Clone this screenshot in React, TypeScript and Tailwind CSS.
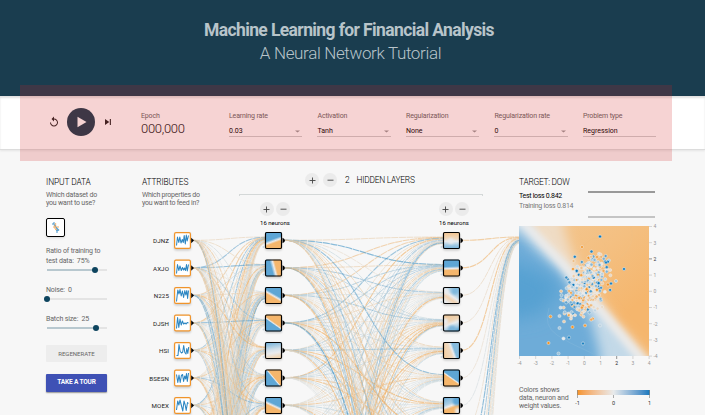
import React from "react";

const ORANGE = [245, 147, 34];
const NEUTRAL = [232, 234, 235];
const BLUE = [8, 119, 189];

function mix(w: number, neutral = NEUTRAL) {
  const t = Math.min(1, Math.abs(w));
  const end = w < 0 ? ORANGE : BLUE;
  return `rgb(${neutral.map((c, i) => Math.round(c + (end[i] - c) * t)).join(",")})`;
}

function makeRandom(seed: number) {
  let s = seed;
  return () => {
    s = (s + 0x6d2b79f5) | 0;
    let t = Math.imul(s ^ (s >>> 15), 1 | s);
    t = (t + Math.imul(t ^ (t >>> 7), 61 | t)) ^ t;
    return ((t ^ (t >>> 14)) >>> 0) / 4294967296;
  };
}

const controls = [
  { label: "Learning rate", value: "0.03", arrow: true },
  { label: "Activation", value: "Tanh", arrow: true },
  { label: "Regularization", value: "None", arrow: true },
  { label: "Regularization rate", value: "0", arrow: true },
  { label: "Problem type", value: "Regression", arrow: false },
];

const inputs = [
  { name: "DJNZ", d: "M2.500 13.500L3.500 5L4.800 10.500L5.800 5L7 11L8.300 7.500L9.300 10.500L10.200 3.500L11.300 12L12.300 3L13.200 9L14.500 3.500" },
  { name: "AXJO", d: "M2.500 14L3.500 5L4.800 11L6 6.500L7.300 11L8.500 8L9.500 10.500L10.500 8.500L11.500 11L12.500 5L13.300 11.500L14.500 5" },
  { name: "N225", d: "M2.500 14.500L3.800 3L5 7L6 2.500L7.200 9L8.400 4L9.600 10.500L10.800 3.500L11.800 8L12.800 3.500L13.600 11.500L14.500 3.500" },
  { name: "DJSH", d: "M2.500 14L3.600 3L4.800 13L6 4.500L7.200 10.500L8.400 6.500L9.600 9.500L11 8.500L12.200 9.500L13.200 8L14.500 8.500" },
  { name: "HSI", d: "M2.500 13.500L4 13.500L5 2.500L6.200 9.500L7.500 11L8.700 10L9.700 3.500L10.800 10.500L12 12L12.800 6.500L13.800 11.500L14.700 5" },
  { name: "BSESN", d: "M2.500 5L3.800 13L5 5.500L6.200 13L7.400 6L8.600 5L9.600 12L10.700 6.500L11.700 9.500L12.500 4L13.300 12L14.500 3.500" },
  { name: "MOEX", d: "M2.500 13L3.700 4L4.900 8L6 3L7.500 9L8.800 14L10 4L11.200 8L12.200 13.500L13.500 5.500L14.500 6.500" },
];

const PITCH = 27.5;
const LEFT = 142;
const TOP = 226;
const rowY = (i: number) => 240.3 - TOP + i * PITCH;

function buildLinks() {
  const rand = makeRandom(29);
  const links: { d: string; w: number }[] = [];
  const layer = (x1: number, x2: number, n1: number, n2: number, gain: number, bias: number, fixed: Record<string, number>) => {
    for (let j = 0; j < n2; j++) {
      for (let i = 0; i < n1; i++) {
        const r = rand() + rand() + rand() - 1.5;
        const w = fixed[`${i}-${j}`] ?? r * gain + bias;
        const sy = rowY(i);
        const ty = rowY(j) + ((i - (n1 - 1) / 2) / n1) * 7;
        const mx = (x1 + x2) / 2;
        links.push({ w, d: `M${x1} ${sy}C${mx} ${sy} ${mx} ${ty} ${x2} ${ty}` });
      }
    }
  };
  layer(193 - LEFT, 265 - LEFT, 20, 16, 0.55, -0.06, { "1-0": 0.5, "1-1": 0.55, "0-0": -0.2 });
  layer(285 - LEFT, 443 - LEFT, 16, 16, 0.55, -0.04, { "0-1": 0.65, "0-0": -0.25, "1-0": -0.45, "2-0": -0.4, "5-1": 0.3 });
  layer(462 - LEFT, 519 - LEFT, 16, 1, 0.8, 0, {
    "0-0": -0.5, "1-0": -0.55, "2-0": -0.2, "3-0": -0.15, "4-0": -0.55, "5-0": -0.12, "6-0": 0.08,
    "7-0": -0.15, "8-0": 0.6, "9-0": 0.4, "10-0": -0.2, "11-0": 0.45, "12-0": -0.2, "13-0": -0.1, "14-0": 0.1, "15-0": -0.15,
  });
  return links;
}
const links = buildLinks();

type Heat = { a: number; stops: [number, string][]; blobs?: [number, number, number, string][] };
const B = "#5ea6d5";
const O = "#f5b66c";
const W = "#e9ebed";
const layer1: Heat[] = [
  { a: 70, stops: [[0, B], [40, B], [54, W], [66, O], [100, O]] },
  { a: -15, stops: [[0, B], [38, B], [54, W], [66, O], [100, O]] },
  { a: 120, stops: [[0, B], [40, B], [52, W], [62, O], [100, O]] },
  { a: 125, stops: [[0, O], [44, O], [52, W], [58, B], [100, B]] },
  { a: 80, stops: [[0, "#77b3da"], [45, "#d4e1ea"], [65, W], [100, "#f1cfa5"]] },
  { a: -40, stops: [[0, B], [44, B], [51, W], [56, O], [100, O]] },
  { a: 115, stops: [[0, B], [40, B], [52, W], [62, O], [100, O]] },
];
const layer2: Heat[] = [
  { a: 90, stops: [[0, "#f2c28b"], [40, "#efd9bf"], [55, W], [75, "#a5cbe3"], [100, "#74b1da"]], blobs: [[8, 9, 3, W]] },
  { a: 88, stops: [[0, B], [40, B], [53, W], [64, O], [100, O]] },
  { a: 125, stops: [[0, "#8fc0df"], [35, "#b5d3e6"], [52, W], [72, "#f1d2b0"], [100, W]], blobs: [[3, 4, 3, W], [12, 4, 3.5, "#7fb8dc"]] },
  { a: 70, stops: [[0, "#efc99c"], [35, "#efd4b4"], [55, W], [80, "#a9cce3"], [100, B]], blobs: [[2, 7, 3, W], [9, 15, 4, "#7ab4da"]] },
  { a: -20, stops: [[0, "#f3cda0"], [42, "#efd9c0"], [55, W], [68, "#83badd"], [100, "#8bbddd"]] },
  { a: 125, stops: [[0, B], [44, B], [51, W], [58, O], [100, O]] },
  { a: 70, stops: [[0, "#7bb5db"], [35, "#aacde3"], [50, W], [64, O], [100, O]], blobs: [[14, 4, 4.500, B], [15, 14, 3, W]] },
];

function HeatNode({ x, y, heat, id }: { x: number; y: number; heat: Heat; id: string }) {
  const r = (heat.a * Math.PI) / 180;
  const dx = Math.cos(r) * 0.5;
  const dy = Math.sin(r) * 0.5;
  return (
    <g transform={`translate(${x} ${y})`}>
      <defs>
        <linearGradient id={id} x1={0.5 - dx} y1={0.5 - dy} x2={0.5 + dx} y2={0.5 + dy}>
          {heat.stops.map(([o, c], i) => <stop key={i} offset={`${o}%`} stopColor={c} />)}
        </linearGradient>
        <clipPath id={`${id}-clip`}><rect width="17" height="17" rx="1.5" /></clipPath>
      </defs>
      <rect x="0" y="1" width="17" height="17.500" rx="2" fill="#000" opacity=".18" filter="url(#soft)" />
      <circle cx="-1.500" cy="15" r="1" fill="#c9d9e3" />
      <g clipPath={`url(#${id}-clip)`}>
        <rect width="17" height="17" fill={`url(#${id})`} />
        {heat.blobs?.map(([cx, cy, br, c], i) => <circle key={i} cx={cx} cy={cy} r={br} fill={c} filter="url(#soft)" />)}
      </g>
      <rect x=".5" y=".5" width="16" height="16" rx="1.2" fill="none" stroke="#000" strokeWidth="1.150" />
      <path d="M17.500 5.800Q20 7 20 8.500Q20 10 17.500 11.200Z" fill="#000" />
    </g>
  );
}

function Network() {
  return (
    <svg className="block" width="377" height="189" viewBox="0 0 377 189">
      <defs>
        <filter id="soft" x="-50%" y="-50%" width="200%" height="200%"><feGaussianBlur stdDeviation="1" /></filter>
      </defs>
      <g fill="none" strokeDasharray="7 0.6">
        {links.map((l, i) => (
          <path key={i} d={l.d} stroke={mix(l.w * 1.15, [226, 226, 222])} strokeWidth={0.85 + Math.abs(l.w) * 0.5} strokeOpacity={0.6} />
        ))}
      </g>
      {inputs.map((n, i) => (
        <g key={n.name} transform={`translate(${174 - LEFT} ${rowY(i) - 8.3})`}>
          <text x="-5" y="11" textAnchor="end" fontSize="6.200" fill="#222" letterSpacing=".1" className="font-['Roboto',sans-serif]">{n.name}</text>
          <rect x="0" y="1" width="17" height="17.500" rx="2" fill="#000" opacity=".18" filter="url(#soft)" />
          <rect x=".6" y=".6" width="15.800" height="15.800" rx="1.300" fill="#fff" stroke="#f0942b" strokeWidth="1.200" />
          <path d={n.d} fill="none" stroke="#2c86c2" strokeWidth="1.050" strokeLinejoin="round" />
          <path d="M17.200 5.800L20 8.500L17.200 11.200Z" fill="#000" />
        </g>
      ))}
      {layer1.map((h, i) => <HeatNode key={i} id={`first-${i}`} x={265 - LEFT} y={rowY(i) - 8.3} heat={h} />)}
      {layer2.map((h, i) => <HeatNode key={i} id={`second-${i}`} x={443 - LEFT} y={rowY(i) - 8.3} heat={h} />)}
    </svg>
  );
}

function buildDots() {
  const rand = makeRandom(12);
  const gauss = () => Math.sqrt(-2 * Math.log(rand() + 1e-9)) * Math.cos(2 * Math.PI * rand());
  const dots: { x: number; y: number; w: number }[] = [];
  for (let i = 0; i < 430; i++) {
    const g = gauss();
    const h = gauss();
    const y = 61 + g * 16;
    const x = 67 - g * 5 + h * 9;
    if (y < 27 || y > 97 || x < 40 || x > 92) continue;
    const bias = y > 62 ? -0.1 : 0.14;
    dots.push({ x, y, w: Math.max(-1, Math.min(1, gauss() * 0.48 + bias)) });
  }
  const extra: [number, number, number][] = [
    [81, 10.5, 1], [63, 21, -0.9], [55.8, 30.7, 0.9], [87, 36.5, 0.9], [105, 43, 0.9], [97, 55, 0.3],
    [31.5, 90.5, -0.9], [29.5, 117, -1], [50, 111.500, 0.9], [64, 117.500, 0.9], [39.5, 127.500, 0.35],
    [44.500, 112.500, 0], [66, 99.500, -0.9], [81, 99.500, 0.2], [53.500, 101, -1], [40.500, 102, 0.3],
    [45, 95.500, -0.3], [92, 57.5, 0.9], [72.500, 25.500, 0.9], [78, 31, -0.8], [40.500, 90, 0.2], [54, 43, -0.9],
  ];
  extra.forEach(([x, y, w]) => dots.push({ x, y, w }));
  return dots;
}
const dots = buildDots();
const ticks = [4, 3, 2, 1, 0, -1, -2, -3, -4];

function Heatmap() {
  return (
    <svg className="mt-[7px] block overflow-visible" width="150" height="144" viewBox="0 0 150 144">
      <defs>
        <clipPath id="map"><rect width="130" height="130" /></clipPath>
        <filter id="map-near" x="-40%" y="-40%" width="180%" height="180%"><feGaussianBlur stdDeviation="3.500" /></filter>
        <filter id="map-mid" x="-40%" y="-40%" width="180%" height="180%"><feGaussianBlur stdDeviation="6" /></filter>
        <filter id="map-far" x="-60%" y="-60%" width="220%" height="220%"><feGaussianBlur stdDeviation="9" /></filter>
        <linearGradient id="map-orange" x1=".2" y1="0" x2=".8" y2=".7">
          <stop offset="0" stopColor="#f3c68f" /><stop offset=".5" stopColor="#f4bf80" /><stop offset="1" stopColor="#f5b66d" />
        </linearGradient>
      </defs>
      <g clipPath="url(#map)">
        <rect width="130" height="130" fill="url(#map-orange)" />
        <path d="M-20 -30H40L46 8L56 34L76 68L98 97L126 128L144 150V160H-20Z" fill="#efdcc5" filter="url(#map-mid)" />
        <path d="M-20 -30L4 -8L22 16L45 40L64 65L84 87L109 117L124 135V160H-20Z" fill="#c3d9e8" filter="url(#map-near)" />
        <path d="M-30 2L0 8L20 27L42 48L58 72L72 94L80 124L84 160H-30Z" fill="#6eacd8" filter="url(#map-mid)" />
        <path d="M-30 34L4 38L38 54L40 68L18 90L-30 96Z" fill="#57a1d2" filter="url(#map-far)" />
        <path d="M-6 -14L21 14L44 38L64 63L84 87L109 117L130 142" fill="none" stroke="#eeeeef" strokeWidth="8" filter="url(#map-near)" />
        <path d="M30 82Q24 100 38 109T62 122T84 134" fill="none" stroke="#83b8dc" strokeWidth=".8" opacity=".6" />
        <path d="M60 26Q78 0 88 22T70 55M112 0Q118 20 98 34" fill="none" stroke="#f1bf82" strokeWidth=".9" opacity=".7" />
      </g>
      {dots.map((p, i) => (
        <circle key={i} cx={p.x} cy={p.y} r="1.550" fill={mix(p.w)} stroke="#eeeeee" strokeOpacity=".65" strokeWidth=".75" />
      ))}
      {ticks.map((t, i) => {
        const p = 0.5 + i * 16.2;
        const strong = t === 2;
        return (
          <g key={`r${t}`} fill={strong ? "#333" : "#999"} fontSize="5" className="font-['Roboto',sans-serif]">
            <path d={`M130 ${p}h3`} stroke={strong ? "#777" : "#ccc"} strokeWidth=".8" />
            <text x="134.500" y={p + 1.8}>{t}</text>
          </g>
        );
      })}
      {ticks.map((t, i) => {
        const p = 0.5 + (8 - i) * 16.2;
        const strong = t === 2;
        return (
          <g key={`b${t}`} fill={strong ? "#222" : "#999"} fontSize="5" className="font-['Roboto',sans-serif]">
            <path d={`M${p} 130v3`} stroke={strong ? "#777" : "#ccc"} strokeWidth=".8" />
            <text x={p} y="138.500" textAnchor="middle">{t}</text>
          </g>
        );
      })}
    </svg>
  );
}

function RoundButton({ minus }: { minus?: boolean }) {
  return (
    <span className="flex size-3.5 items-center justify-center rounded-full bg-[#ebebeb]">
      <svg width="7" height="7" viewBox="0 0 7 7" stroke="#444" strokeWidth=".9">
        <path d={minus ? "M.5 3.200H6.500" : "M.5 3.500H6.500M3.500 .5V6.500"} />
      </svg>
    </span>
  );
}

function Slider({ pct }: { pct: number }) {
  return (
    <div className="relative ml-px h-[5px] w-[60px]">
      <div className="absolute top-[1.5px] h-[2px] w-full bg-[#e4e4e4]" />
      <div className="absolute top-[1.5px] h-[2px] bg-[#b8c8cf]" style={{ width: `${pct}%` }} />
      <div className="absolute -top-[0.5px] -ml-[3px] size-1.5 rounded-full bg-[#0d445e]" style={{ left: `${pct}%` }} />
    </div>
  );
}

function NeuronCount() {
  return (
    <div className="flex w-[34px] flex-col items-center">
      <div className="flex gap-[2.5px]"><RoundButton /><RoundButton minus /></div>
      <div className="mt-[3px] text-[6px] leading-[8px] whitespace-nowrap text-black">16 neurons</div>
    </div>
  );
}

export default function App() {
  return (
    <div className="relative h-[415px] w-[705px] overflow-hidden bg-[#f7f7f7] font-['Roboto',sans-serif] tracking-[-0.15px] text-[#666]">
      <header className="flex h-24 flex-col items-center bg-[#1a3d4f] pt-[18px] pr-[7px] text-[#b8c4ca]">
        <h1 className="text-[17.5px] leading-[24px] font-bold tracking-[-0.62px] whitespace-nowrap">Machine Learning for Financial Analysis</h1>
        <p className="pl-[3px] text-[17px] leading-[23px] font-light tracking-[-0.35px] whitespace-nowrap">A Neural Network Tutorial</p>
      </header>

      <section className="flex h-[54px] border-b border-[#dcdcdc] bg-white pl-[48px] shadow-[0_1px_2px_rgba(0,0,0,0.08),inset_0_2px_2px_rgba(0,0,0,0.12)]">
        <div className="flex w-[93px] items-center gap-[7px] pb-[1px]">
          <svg width="12" height="12" viewBox="0 0 24 24" fill="#222"><path d="M12 5V1L7 6l5 5V7c3.310 0 6 2.690 6 6s-2.690 6-6 6-6-2.690-6-6H4c0 4.420 3.580 8 8 8s8-3.580 8-8-3.580-8-8-8z" /></svg>
          <span className="flex size-7 items-center justify-center rounded-full bg-[#1a3d4f]">
            <svg className="ml-[2px]" width="10" height="12" viewBox="0 0 10 12" fill="#fff"><path d="M.5 .8V11.200L9.500 6z" /></svg>
          </span>
          <svg className="ml-[2px]" width="8" height="8" viewBox="0 0 8 8" fill="#222"><path d="M1 1V7L5.300 4zM5.800 1h1.100v6H5.800z" /></svg>
        </div>
        <div className="w-[88px] pt-[15px]">
          <div className="text-[7px] leading-[10px]">Epoch</div>
          <div className="text-[13px] leading-[16px] font-light tracking-[-0.3px] text-[#111]">000,000</div>
        </div>
        <div className="flex gap-[15.3px] pt-[15px]">
          {controls.map((c) => (
            <div key={c.label} className="w-[73.2px]">
              <div className="text-[7px] leading-[10px] tracking-[-0.15px] whitespace-nowrap">{c.label}</div>
              <div className="mt-[3px] flex h-[13px] items-center justify-between border-b border-[#cfcfcf] pt-[2px] pr-[2px] text-[7px] tracking-normal text-black">
                <span>{c.value}</span>
                {c.arrow && <svg width="5" height="3" viewBox="0 0 5 3"><path d="M0 .5H5L2.500 2.500z" fill="#999" /></svg>}
              </div>
            </div>
          ))}
        </div>
      </section>

      <main className="flex pl-[46px]">
        <aside className="w-24 pt-[26px]">
          <h2 className="text-[8.4px] leading-[12px] font-light tracking-[-0.1px] text-black">INPUT DATA</h2>
          <p className="mt-[2.500px] text-[7px] leading-[8px] tracking-[-0.2px] whitespace-nowrap">Which dataset do<br />you want to use?</p>
          <div className="mt-[11px] flex size-[19px] items-center justify-center rounded-[2px] border border-black bg-white shadow-sm">
            <svg width="15" height="15" viewBox="0 0 15 15">
              {[[5, 4, 1], [6, 3, 1], [6.5, 5, 1], [7.5, 4, 0], [7.500, 6, 1], [6, 7, 0], [8, 7, 0], [7, 8, 0], [8.500, 8, 1], [9.500, 9, 1], [8, 9.500, 0], [9, 10.500, 1], [10.500, 10, 1], [9, 12, 1], [7, 6, 0], [10, 7, 0]].map(([x, y, b], i) => (
                <circle key={i} cx={x} cy={y} r=".8" fill={b ? "#2c86c2" : "#f2a04d"} />
              ))}
            </svg>
          </div>
          <p className="mt-[9px] text-[7px] leading-[10px] whitespace-nowrap">Ratio of training to<br />test data:&nbsp; 75%</p>
          <div className="mt-[2px]"><Slider pct={80} /></div>
          <p className="mt-[12px] text-[7px] leading-[10px]">Noise:&nbsp; 0</p>
          <div className="mt-[2px]"><Slider pct={0} /></div>
          <p className="mt-[12px] text-[7px] leading-[10px]">Batch size:&nbsp; 25</p>
          <div className="mt-[2px]"><Slider pct={81.500} /></div>
          <div className="mt-[14px] flex h-[17px] w-[61px] items-center justify-center rounded-[1px] bg-[#ededed] text-[6px] tracking-normal text-[#666]">REGENERATE</div>
          <div className="mt-[12px] flex h-[18px] w-[61px] items-center justify-center rounded-[1px] bg-[#3f51b5] text-[6.500px] font-bold text-white shadow-[0_1px_1.500px_rgba(0,0,0,0.4)]">TAKE A TOUR</div>
        </aside>

        <section className="w-[377px]">
          <div className="flex h-[76px]">
            <div className="w-[97px] pt-[26px]">
              <h2 className="text-[8.4px] leading-[12px] font-light text-black">ATTRIBUTES</h2>
              <p className="mt-[2.500px] text-[7px] leading-[8px] tracking-[-0.25px] whitespace-nowrap">Which properties do<br />you want to feed in?</p>
            </div>
            <div className="w-[244px] pt-[23px]">
              <div className="flex h-[14px] items-center gap-[4px] pl-[66px] text-[8.4px] font-light tracking-[-0.25px] text-black">
                <RoundButton /><RoundButton minus />
                <span className="ml-[4px] pt-px whitespace-nowrap">2&nbsp;&nbsp;&nbsp; HIDDEN LAYERS</span>
              </div>
              <div className="mt-[7px] h-[2px] border-x border-t border-[#d4d8d8]" />
              <div className="mt-[6px] flex justify-between pr-[12px] pl-[19px] tracking-normal"><NeuronCount /><NeuronCount /></div>
            </div>
          </div>
          <Network />
        </section>

        <aside className="pt-[26px]">
          <h2 className="text-[8.4px] leading-[12px] font-light tracking-[-0.25px] text-black">TARGET: DOW</h2>
          <div className="flex h-[31px]">
            <div className="w-[69px] pt-[3px] text-[7px] leading-[10px] whitespace-nowrap">
              <div className="tracking-[-0.3px] text-black">Test loss 0.842</div>
              <div className="tracking-[-0.25px] text-[#777]">Training loss 0.814</div>
            </div>
            <div className="flex w-[67px] flex-col justify-between pt-[3px] pb-px">
              <div className="h-[2px] bg-[#999]" />
              <div className="h-[2px] bg-[#c4c4c4]" />
            </div>
          </div>
          <Heatmap />
          <div className="mt-[16px] flex">
            <p className="w-[58px] text-[7px] leading-[8px] whitespace-nowrap">Colors shows<br />data, neuron and<br />weight values.</p>
            <div className="w-[73px] pt-[4px]">
              <div className="h-[5px] bg-linear-to-r from-[#f59322] via-[#e8eaeb] to-[#0877bd]" />
              <svg className="block overflow-visible" width="73" height="12" viewBox="0 0 73 12">
                <path d="M.5 -5V3M36.500 0V3M72.500 -5V3" stroke="#888" strokeWidth=".7" />
                <g fontSize="5.500" fill="#333" textAnchor="middle"><text x="0.500" y="10">-1</text><text x="36.500" y="10">0</text><text x="72.500" y="10">1</text></g>
              </svg>
            </div>
          </div>
        </aside>
      </main>

      <div className="pointer-events-none absolute top-[85px] left-[20px] h-[76px] w-[652px] bg-[rgba(212,36,36,0.2)]" />
    </div>
  );
}
